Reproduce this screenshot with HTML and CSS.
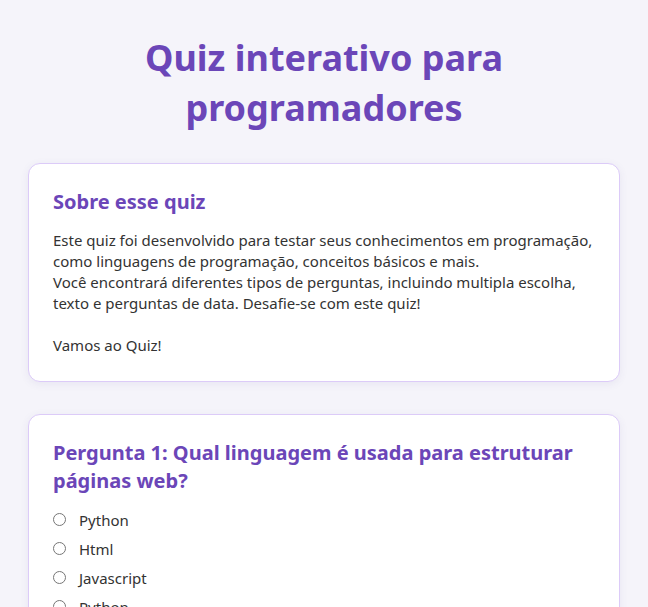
FILE: index.html
```html
<!DOCTYPE html>
<html lang="pt-BR">
<head>
<meta charset="utf-8">
<title>Quiz interativo para programadores</title>
<link rel="stylesheet" href="styles.css">
</head>
<body>
<main class="page">
  <h1 class="title">Quiz interativo para programadores</h1>

  <section class="card">
    <h2 class="card-title">Sobre esse quiz</h2>
    <p class="card-text">Este quiz foi desenvolvido para testar seus conhecimentos em programação, como linguagens de programação, conceitos básicos e mais.<br>Você encontrará diferentes tipos de perguntas, incluindo multipla escolha, texto e perguntas de data. Desafie-se com este quiz!<br><br>Vamos ao Quiz!</p>
  </section>

  <section class="card">
    <h2 class="card-title">Pergunta 1: Qual linguagem é usada para estruturar páginas web?</h2>
    <div class="options">
      <label class="option"><input type="radio" name="q1" value="python"><span>Python</span></label>
      <label class="option"><input type="radio" name="q1" value="html"><span>Html</span></label>
      <label class="option"><input type="radio" name="q1" value="javascript"><span>Javascript</span></label>
      <label class="option"><input type="radio" name="q1" value="python2"><span>Python</span></label>
    </div>
  </section>
</main>
</body>
</html>
```
FILE: styles.css
```css
* {
  box-sizing: border-box;
}

html, body {
  margin: 0;
  padding: 0;
}

body {
  background: #f5f4fa;
  font-family: "Noto Sans", "Open Sans", sans-serif;
  color: #333333;
}

.page {
  padding: 33px 28px 40px;
  display: flex;
  flex-direction: column;
  gap: 32px;
}

.title {
  margin: 0 0 -2px;
  text-align: center;
  color: #6b46b8;
  font-size: 36px;
  line-height: 50px;
  font-weight: 700;
}

.card {
  background: #ffffff;
  border: 1px solid #dccbf8;
  border-radius: 12px;
  box-shadow: 0 2px 8px rgba(80, 60, 140, 0.08);
  padding: 24px 24px 25px;
}

.card-title {
  margin: 0 0 14px;
  color: #6b46b8;
  font-size: 20px;
  line-height: 28px;
  font-weight: 700;
}

.card-text {
  margin: 0;
  font-size: 15px;
  line-height: 21px;
}

.options {
  display: flex;
  flex-direction: column;
  margin-top: -4px;
}

.option {
  display: flex;
  align-items: center;
  gap: 13px;
  height: 29px;
  font-size: 15px;
}

.option input {
  margin: 0;
  width: 13px;
  height: 13px;
}
```
